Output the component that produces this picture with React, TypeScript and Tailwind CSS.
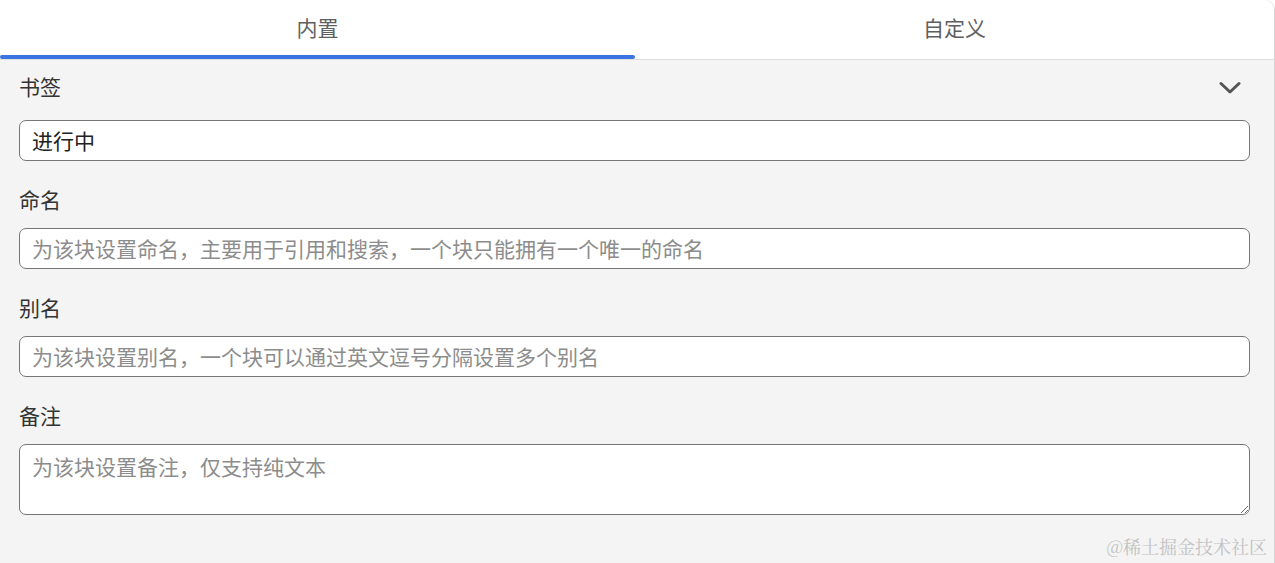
import React, { useState } from 'react';

const font = { fontFamily: '"Microsoft YaHei", "Noto Sans CJK SC", "Noto Sans", sans-serif' };

const Field = ({ label, placeholder, multi }: { label: string; placeholder: string; multi?: boolean }) => (
    <div className="mt-[24px]">
        <div className="text-[21px] leading-[28px] text-[#333] mb-[15px]">{label}</div>
        {multi ? (
            <textarea
                placeholder={placeholder}
                className="block w-full h-[71px] rounded-[7px] border border-[#767676] bg-white px-[12px] pt-[7px] text-[21px] leading-[28px] text-[#222] placeholder:text-[#8c8c8c] outline-none"
            />
        ) : (
            <input
                placeholder={placeholder}
                className="block w-full h-[41px] rounded-[7px] border border-[#767676] bg-white px-[12px] pb-[1px] text-[21px] text-[#222] placeholder:text-[#8c8c8c] outline-none"
            />
        )}
    </div>
);

export default function App() {
    const [tab, setTab] = useState(0);
    const tabs = ['内置', '自定义'];

    return (
        <div className="w-[1275px] h-[563px] overflow-hidden bg-[#f4f4f4] border-r border-[#d6d6d6] rounded-tr-[10px]" style={font}>
            <div className="flex h-[60px] bg-white border-b border-[#dedede]">
                {tabs.map((t, i) => (
                    <button
                        key={t}
                        onClick={() => setTab(i)}
                        className={`flex flex-col ${i === 0 ? 'w-[635px]' : 'flex-1'}`}
                    >
                        <span className="flex-1 flex items-center justify-center text-[21px] text-[#5f5f5f]">{t}</span>
                        <span className={`h-[4px] rounded-full ${tab === i ? 'bg-[#3b73e0]' : 'bg-transparent'}`} />
                    </button>
                ))}
            </div>

            <div className="px-[19px] pr-[24px]">
                <div className="flex items-center justify-between pt-[12px] mb-[20px]">
                    <span className="text-[21px] leading-[28px] text-[#333]">书签</span>
                    <svg width="22" height="14" viewBox="0 0 22 14" className="mr-[9px] mt-[4px]">
                        <path d="M2 2.5 L11 11 L20 2.5" fill="none" stroke="#555" strokeWidth="3" strokeLinecap="round" strokeLinejoin="round" />
                    </svg>
                </div>
                <input
                    defaultValue="进行中"
                    className="block w-full h-[41px] rounded-[7px] border border-[#767676] bg-white px-[12px] pb-[1px] text-[21px] text-[#222] outline-none"
                />

                <Field label="命名" placeholder="为该块设置命名，主要用于引用和搜索，一个块只能拥有一个唯一的命名" />
                <Field label="别名" placeholder="为该块设置别名，一个块可以通过英文逗号分隔设置多个别名" />
                <Field label="备注" placeholder="为该块设置备注，仅支持纯文本" multi />

                <div className="flex justify-end mt-[19px] -mr-[17px]">
                    <span className="text-[18px] leading-[24px] text-[#c2c2c2]" style={{ fontFamily: '"Noto Serif CJK SC", "Noto Sans CJK SC", serif' }}>@稀土掘金技术社区</span>
                </div>
            </div>
        </div>
    );
}
